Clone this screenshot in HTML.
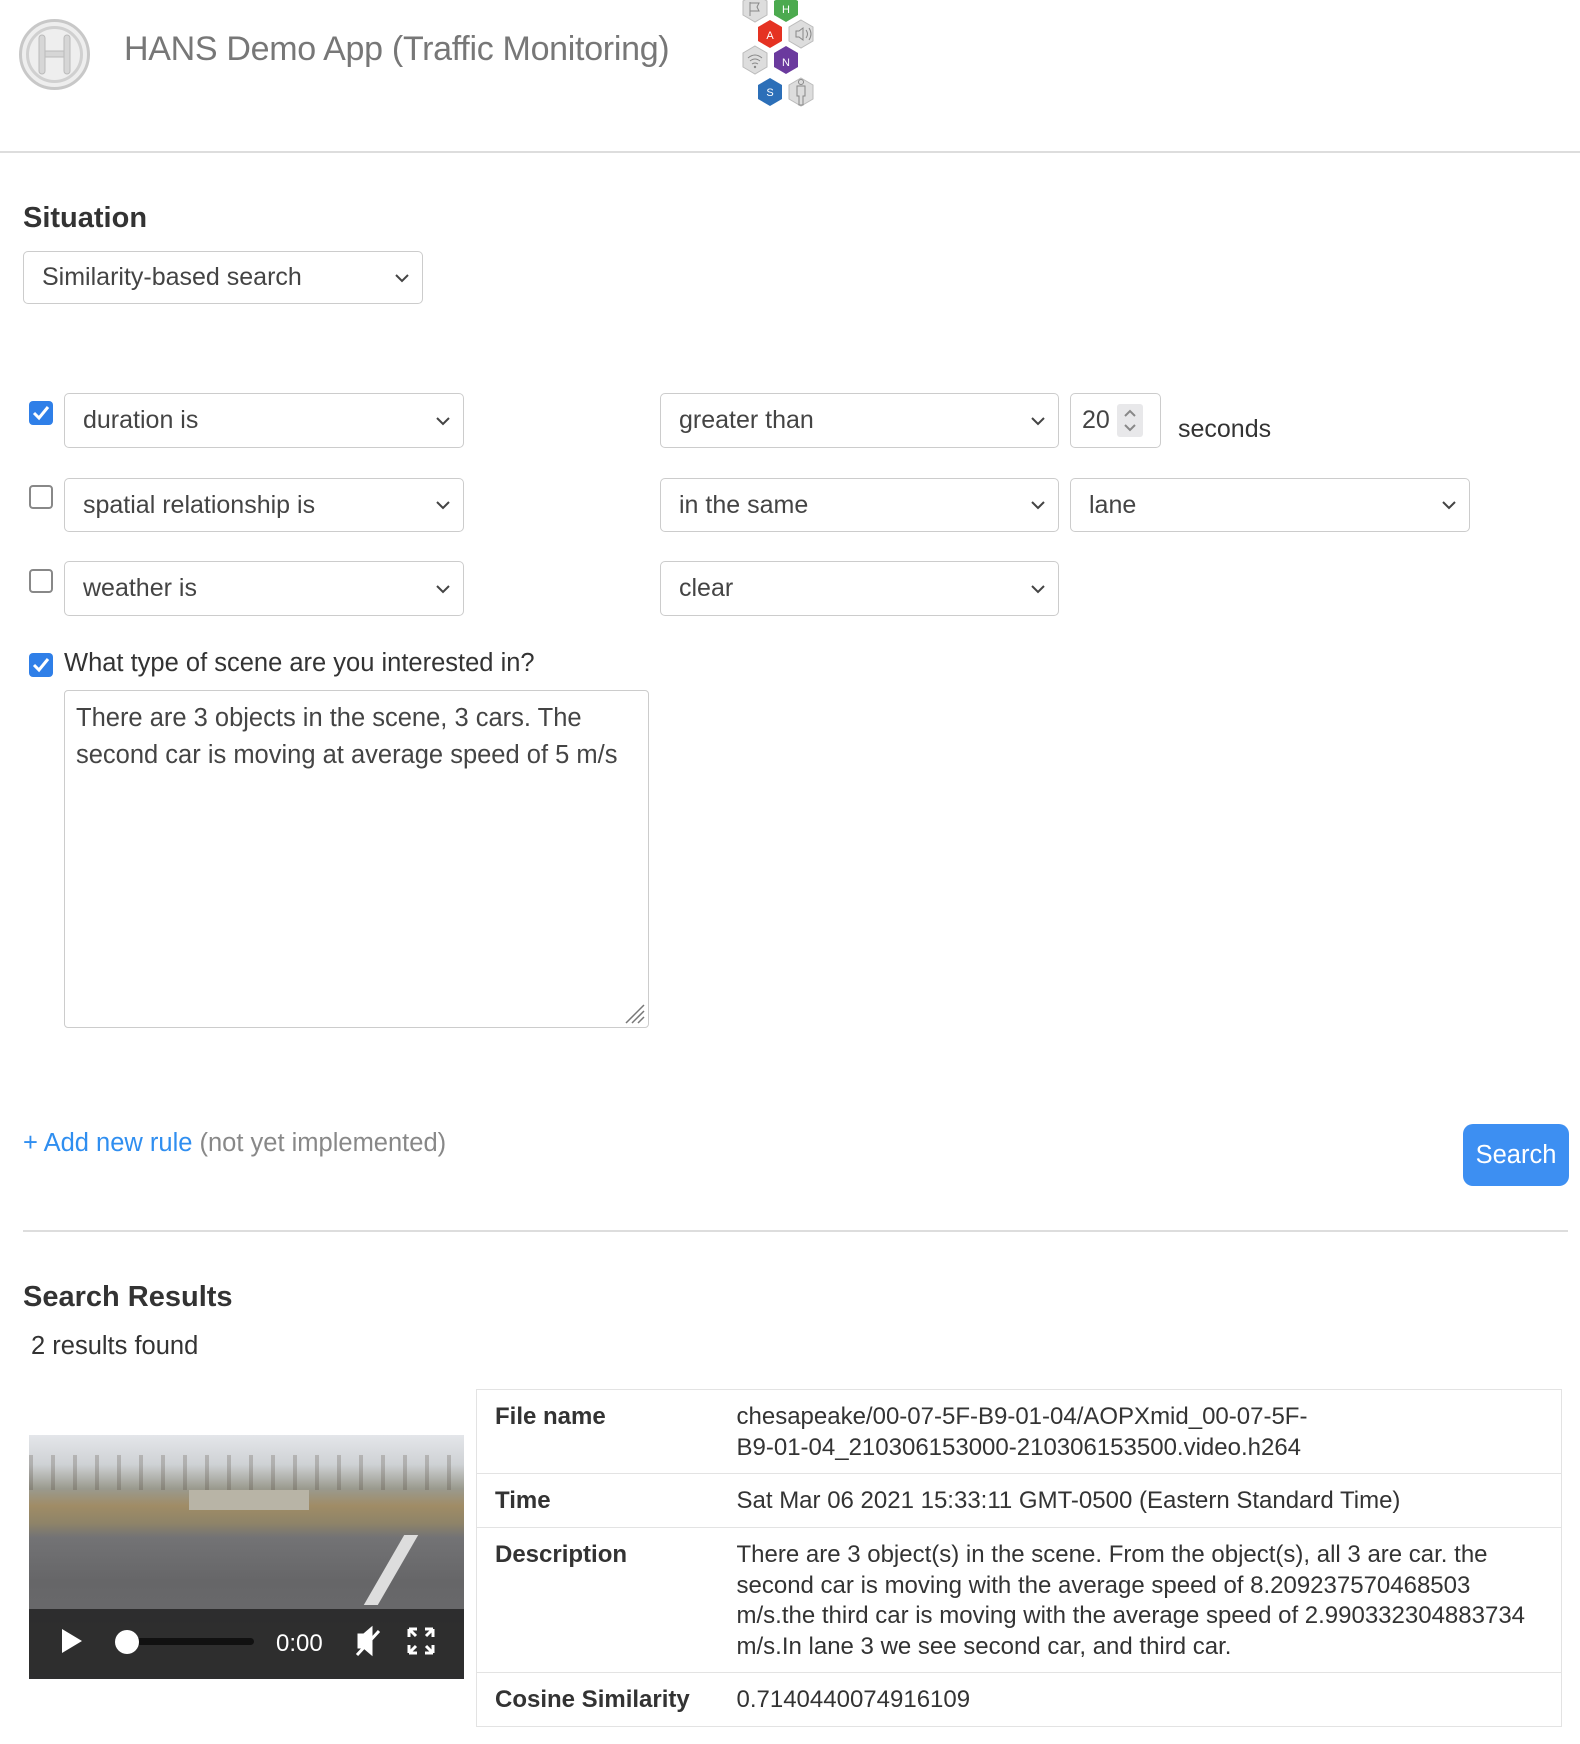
<!DOCTYPE html>
<html><head><meta charset="utf-8"><style>
*{box-sizing:border-box;margin:0;padding:0}
body{width:1580px;height:1744px;background:#fff;font-family:"Liberation Sans",Arial,sans-serif;color:#333;position:relative;overflow:hidden}
.a{position:absolute}
.sel{position:absolute;border:1px solid #ccc;border-radius:5px;background:#fff;font-size:25px;color:#444;padding-left:18px;display:flex;align-items:center}
.sel .ch{position:absolute;right:12px;top:50%;margin-top:-5px}
.cb{position:absolute;width:24px;height:24px;border-radius:4px}
.on{background:#2f7fe8}
.off{border:2px solid #888;background:#fff}
td{vertical-align:top;border-top:1px solid #e3e3e3;font-size:24px;line-height:30.5px;padding:12px 18px 10px}
</style></head><body>
<!-- header -->
<svg class="a" style="left:18px;top:18px" width="73" height="73" viewBox="0 0 73 73">
<circle cx="36.5" cy="36.5" r="34" fill="#eee" stroke="#c8c8c8" stroke-width="3"/>
<circle cx="36.5" cy="36.5" r="27" fill="none" stroke="#d0d0d0" stroke-width="3"/>
<rect x="21" y="17" width="6" height="39" rx="3" fill="#d6d6d6" stroke="#bbb"/>
<rect x="46" y="17" width="6" height="39" rx="3" fill="#d6d6d6" stroke="#bbb"/>
<rect x="27" y="33" width="19" height="6" fill="#d6d6d6" stroke="#bbb"/>
</svg>
<div class="a" style="left:124px;top:30px;font-size:34px;color:#777;letter-spacing:-0.3px">HANS Demo App (Traffic Monitoring)</div>
<svg class="a" style="left:738px;top:0" width="82" height="112" viewBox="0 0 82 112">
<g font-family="Liberation Sans" font-size="11" text-anchor="middle" fill="#fff">
<polygon points="17,-6 29,1 29,15 17,22 5,15 5,1" fill="#ddd" stroke="#bbb"/>
<path d="M12 2v14M12 3h9l-2 4 2 4h-9" stroke="#888" fill="none"/>
<polygon points="48,-6 60,1 60,15 48,22 36,15 36,1" fill="#4caa4f"/><text x="48" y="13">H</text>
<polygon points="32,20 44,27 44,41 32,48 20,41 20,27" fill="#e53222"/><text x="32" y="39">A</text>
<polygon points="63,20 75,27 75,41 63,48 51,41 51,27" fill="#ddd" stroke="#bbb"/>
<path d="M58 31h3l4-3v12l-4-3h-3zM68 30q3 4 0 8M71 28q4 6 0 12" stroke="#888" fill="none"/>
<polygon points="17,46 29,53 29,67 17,74 5,67 5,53" fill="#ddd" stroke="#bbb"/>
<path d="M10 58q7-6 14 0M12 61q5-4 10 0M14 64q3-2 6 0" stroke="#888" fill="none"/><circle cx="17" cy="67" r="1.2" fill="#888"/>
<polygon points="48,46 60,53 60,67 48,74 36,67 36,53" fill="#6b3a9e"/><text x="48" y="66">N</text>
<polygon points="32,78 44,85 44,99 32,106 20,99 20,85" fill="#2c6fb8"/><text x="32" y="96">S</text>
<polygon points="63,78 75,85 75,99 63,106 51,99 51,85" fill="#ddd" stroke="#bbb"/>
<circle cx="63" cy="82" r="2.5" stroke="#888" fill="none"/><path d="M59 86h8v10h-2v9h-4v-9h-2z" stroke="#888" fill="none"/>
</g></svg>
<div class="a" style="left:0;top:151px;width:1580px;height:2px;background:#ddd"></div>

<div class="a" style="left:23px;top:202px;font-size:29px;font-weight:bold">Situation</div>
<div class="sel" style="left:23px;top:251px;width:400px;height:53px">Similarity-based search<svg class="ch" width="16" height="10"><path d="M2 2l6 6 6-6" fill="none" stroke="#444" stroke-width="2"/></svg></div>

<div class="cb on" style="left:29px;top:401px"><svg width="24" height="24"><path d="M5 12l5 5 9-11" fill="none" stroke="#fff" stroke-width="3"/></svg></div>
<div class="sel" style="left:64px;top:393px;width:400px;height:55px">duration is<svg class="ch" width="16" height="10"><path d="M2 2l6 6 6-6" fill="none" stroke="#444" stroke-width="2"/></svg></div>
<div class="sel" style="left:660px;top:393px;width:399px;height:55px">greater than<svg class="ch" width="16" height="10"><path d="M2 2l6 6 6-6" fill="none" stroke="#444" stroke-width="2"/></svg></div>
<div class="sel" style="left:1070px;top:393px;width:91px;height:55px;padding-left:11px">20<div class="a" style="left:46px;top:10px;width:26px;height:33px;background:#e8e8ea;border-radius:3px"><svg width="26" height="33"><path d="M8 12l5-5 5 5M8 21l5 5 5-5" fill="none" stroke="#888" stroke-width="2"/></svg></div></div>
<div class="a" style="left:1178px;top:415px;font-size:25px">seconds</div>

<div class="cb off" style="left:29px;top:485px"></div>
<div class="sel" style="left:64px;top:478px;width:400px;height:54px">spatial relationship is<svg class="ch" width="16" height="10"><path d="M2 2l6 6 6-6" fill="none" stroke="#444" stroke-width="2"/></svg></div>
<div class="sel" style="left:660px;top:478px;width:399px;height:54px">in the same<svg class="ch" width="16" height="10"><path d="M2 2l6 6 6-6" fill="none" stroke="#444" stroke-width="2"/></svg></div>
<div class="sel" style="left:1070px;top:478px;width:400px;height:54px">lane<svg class="ch" width="16" height="10"><path d="M2 2l6 6 6-6" fill="none" stroke="#444" stroke-width="2"/></svg></div>

<div class="cb off" style="left:29px;top:569px"></div>
<div class="sel" style="left:64px;top:561px;width:400px;height:55px">weather is<svg class="ch" width="16" height="10"><path d="M2 2l6 6 6-6" fill="none" stroke="#444" stroke-width="2"/></svg></div>
<div class="sel" style="left:660px;top:561px;width:399px;height:55px">clear<svg class="ch" width="16" height="10"><path d="M2 2l6 6 6-6" fill="none" stroke="#444" stroke-width="2"/></svg></div>

<div class="cb on" style="left:29px;top:653px"><svg width="24" height="24"><path d="M5 12l5 5 9-11" fill="none" stroke="#fff" stroke-width="3"/></svg></div>
<div class="a" style="left:64px;top:649px;font-size:25.5px">What type of scene are you interested in?</div>
<div class="a" style="left:64px;top:690px;width:585px;height:338px;border:1px solid #ccc;border-radius:4px;padding:9px 11px;font-size:25.5px;line-height:37px;color:#444">There are 3 objects in the scene, 3 cars. The<br>second car is moving at average speed of 5 m/s
<svg class="a" style="right:2px;bottom:2px" width="24" height="24"><path d="M22 4L4 22M22 10L10 22M22 16L16 22" stroke="#777" stroke-width="1.5"/></svg></div>

<div class="a" style="left:23px;top:1129px;font-size:25.5px;color:#888"><span style="color:#2f8ef0">+ Add new rule</span> (not yet implemented)</div>
<div class="a" style="left:1463px;top:1124px;width:106px;height:62px;background:#3d8ff2;border-radius:10px;color:#fff;font-size:25.5px;display:flex;align-items:center;justify-content:center">Search</div>
<div class="a" style="left:23px;top:1230px;width:1545px;height:2px;background:#ddd"></div>

<div class="a" style="left:23px;top:1281px;font-size:29px;font-weight:bold">Search Results</div>
<div class="a" style="left:31px;top:1332px;font-size:25.5px">2 results found</div>

<!-- video -->
<div class="a" style="left:29px;top:1435px;width:435px;height:244px;overflow:hidden;background:linear-gradient(#e4e6ea 0%,#cfd2d5 12%,#9a9a8e 22%,#a08c66 29%,#8f8468 36%,#737375 42%,#666668 60%,#6e6e70 100%)">
<div class="a" style="left:0;top:20px;width:435px;height:35px;background:repeating-linear-gradient(90deg,rgba(80,70,60,.25) 0 4px,transparent 4px 22px)"></div>
<div class="a" style="left:160px;top:55px;width:120px;height:20px;background:#b8b4a6"></div>
<div class="a" style="left:355px;top:100px;width:14px;height:70px;background:#ddd;transform:skewX(-30deg)"></div>
<div class="a" style="left:0;top:174px;width:435px;height:70px;background:rgba(35,35,35,.85)"></div>
<svg class="a" style="left:0;top:174px" width="435" height="70">
<path d="M33 20v24l20-12z" fill="#fff"/>
<rect x="96" y="29" width="129" height="7" rx="3.5" fill="#111"/>
<circle cx="98" cy="33" r="12" fill="#fff"/>
<text x="247" y="42" fill="#fff" font-family="Liberation Sans" font-size="24">0:00</text>
<path d="M330 26h5l7-6v24l-7-6h-5z M328 46l22-24" fill="#fff" stroke="#fff" stroke-width="3"/>
<path d="M380 20h8M380 20v8M404 20h-8M404 20v8M380 44h8M380 44v-8M404 44h-8M404 44v-8M381 21l6 6M403 21l-6 6M381 43l6-6M403 43l-6-6" stroke="#fff" stroke-width="3" fill="none"/>
</svg></div>

<table class="a" style="left:476px;top:1389px;width:1086px;border:1px solid #e3e3e3;border-collapse:collapse">
<tr><td style="width:242px;font-weight:bold;height:83px">File name</td><td>chesapeake/00-07-5F-B9-01-04/AOPXmid_00-07-5F-<br>B9-01-04_210306153000-210306153500.video.h264</td></tr>
<tr><td style="font-weight:bold;height:54px">Time</td><td>Sat Mar 06 2021 15:33:11 GMT-0500 (Eastern Standard Time)</td></tr>
<tr><td style="font-weight:bold;height:145px">Description</td><td>There are 3 object(s) in the scene. From the object(s), all 3 are car. the<br>second car is moving with the average speed of 8.209237570468503<br>m/s.the third car is moving with the average speed of 2.990332304883734<br>m/s.In lane 3 we see second car, and third car.</td></tr>
<tr><td style="font-weight:bold;height:53px">Cosine Similarity</td><td>0.7140440074916109</td></tr>
</table>
</body></html>
